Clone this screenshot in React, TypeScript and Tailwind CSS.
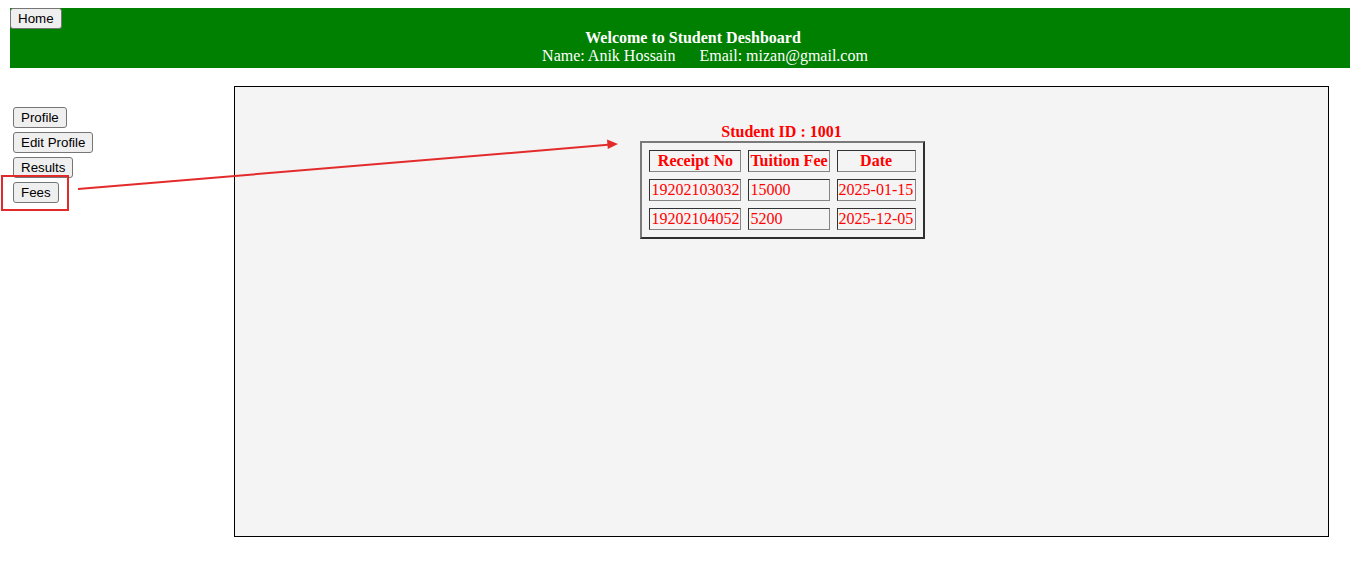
import React from "react";

const btn =
  "bg-[#efefef] border border-[#767676] rounded-[3px] px-[7px] py-[2px] text-[13.333px] leading-[15px] text-black font-['Liberation_Sans',Arial,sans-serif]";

const fees = [
  { receipt: "19202103032", fee: "15000", date: "2025-01-15" },
  { receipt: "19202104052", fee: "5200", date: "2025-12-05" },
];

const th =
  "border border-t-[#333] border-l-[#333] border-r-[#858585] border-b-[#858585] p-[1px] leading-[18px] font-bold text-center whitespace-nowrap";
const td =
  "border border-t-[#333] border-l-[#333] border-r-[#858585] border-b-[#858585] p-[1px] leading-[18px] text-left font-normal whitespace-nowrap";

export default function App() {
  return (
    <div className="relative w-[1350px] h-[571px] bg-white pt-[8px] font-['Liberation_Serif','Times_New_Roman',serif] text-[16px]">
      {/* header */}
      <div className="ml-[10px] h-[60px] bg-[#008000] text-white">
        <button className={`block ${btn}`}>Home</button>
        <div className="pl-[26px] text-center font-bold leading-[18px]">Welcome to Student Deshboard</div>
        <div className="pl-[50px] text-center leading-[18px]">
          Name: Anik Hossain&nbsp;&nbsp;&nbsp;&nbsp;&nbsp; Email: mizan@gmail.com
        </div>
      </div>

      <div className="flex mt-[18px]">
        {/* sidebar */}
        <div className="w-[234px] pl-[13px] pt-[21px] flex flex-col items-start gap-[4px]">
          <button className={btn}>Profile</button>
          <button className={btn}>Edit Profile</button>
          <button className={btn}>Results</button>
          <button className={btn}>Fees</button>
        </div>

        {/* content panel */}
        <div className="w-[1095px] h-[451px] border border-black bg-[#f4f4f4] pt-[36px] flex flex-col items-center text-[#ff0000]">
          <div className="font-bold leading-[18px]">Student ID : 1001</div>
          <table className="ml-[2px] border-separate border-spacing-[7px] border-2 border-t-[#7a7a7a] border-l-[#7a7a7a] border-r-[#2f2f2f] border-b-[#2f2f2f]">
            <thead>
              <tr>
                <th className={`w-[92px] ${th}`}>Receipt No</th>
                <th className={`w-[81px] ${th}`}>Tuition Fee</th>
                <th className={`w-[79px] ${th}`}>Date</th>
              </tr>
            </thead>
            <tbody>
              {fees.map((f) => (
                <tr key={f.receipt}>
                  <td className={td}>{f.receipt}</td>
                  <td className={td}>{f.fee}</td>
                  <td className={td}>{f.date}</td>
                </tr>
              ))}
            </tbody>
          </table>
        </div>
      </div>

      {/* annotation: highlight box + arrow */}
      <div className="absolute left-[1px] top-[175px] w-[68px] h-[36px] border-2 border-[#e22a2a] pointer-events-none" />
      <svg className="absolute left-0 top-0 pointer-events-none" width="1350" height="571">
        <line x1="78" y1="189" x2="608" y2="144.8" stroke="#e42b2b" strokeWidth="2" />
        <polygon points="618,144 607,139.5 607.8,149" fill="#e42b2b" />
      </svg>
    </div>
  );
}
